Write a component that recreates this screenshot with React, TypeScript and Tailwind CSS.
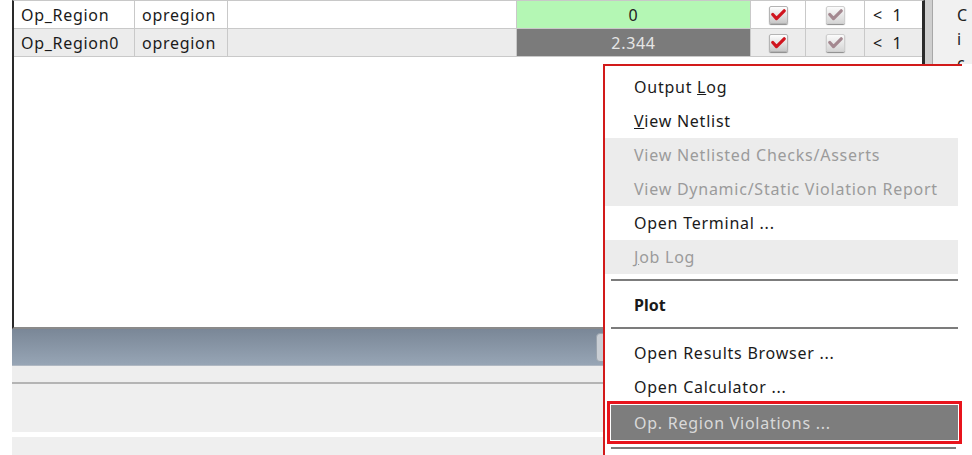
const font = { fontFamily: '"Noto Sans", "Open Sans", sans-serif' };

const Check = ({ disabled }: { disabled?: boolean }) => (
  <div
    className={`flex h-[18px] w-[19px] items-center justify-center rounded-[2px] border shadow-[0_1px_1px_#8a8a8a] ${
      disabled
        ? "border-[#cfcfcf] bg-gradient-to-b from-[#fbfbfb] to-[#d6d6d6]"
        : "border-[#b4b4b4] bg-gradient-to-b from-[#ffffff] to-[#c8c8c8]"
    }`}
  >
    <svg width="15" height="12" viewBox="0 0 15 12">
      <path
        d="M1.8 5.5 L5.5 9.6 L13.2 1.8"
        fill="none"
        stroke={disabled ? "#a48890" : "#d0141e"}
        strokeWidth="3.2"
        strokeLinecap="round"
        strokeLinejoin="round"
      />
    </svg>
  </div>
);

const rows = [
  { name: "Op_Region", type: "opregion", value: "0", pass: true },
  { name: "Op_Region0", type: "opregion", value: "2.344", pass: false },
];

type Item = { label: React.ReactNode; disabled?: boolean; bold?: boolean; sep?: boolean; active?: boolean };

const items: Item[] = [
  { label: <>Output <u>L</u>og</> },
  { label: <><u>V</u>iew Netlist</> },
  { label: "View Netlisted Checks/Asserts", disabled: true },
  { label: "View Dynamic/Static Violation Report", disabled: true },
  { label: "Open Terminal ..." },
  { label: <><u>J</u>ob Log</>, disabled: true },
  { label: "", sep: true },
  { label: "Plot", bold: true },
  { label: "", sep: true },
  { label: "Open Results Browser ..." },
  { label: "Open Calculator ..." },
  { label: "Op. Region Violations ...", active: true },
];

export default function App() {
  return (
    <div className="relative flex h-[455px] w-[972px] overflow-hidden bg-white text-[#1a1a1a]" style={font}>
      {/* main area */}
      <div className="flex w-[933px] flex-col pl-[12px]">
        <div className="flex h-[329px]">
          <div className="flex flex-1 flex-col border-b-2 border-l-2 border-r-[3px] border-t border-[#2a2a2a] border-b-[#8a8a8a] border-t-[#c8c8c8]">
            {rows.map((r, i) => (
              <div
                key={r.name}
                className={`flex h-[28px] border-b border-[#c9c9c9] text-[16px] tracking-[0.7px] ${i === 1 ? "bg-[#ececec]" : "bg-white"}`}
              >
                <div className="flex w-[121px] items-center border-r border-[#c9c9c9] pl-[7px]">{r.name}</div>
                <div className="flex w-[93px] items-center border-r border-[#c9c9c9] pl-[7px]">{r.type}</div>
                <div className="w-[289px] border-r border-[#c9c9c9]" />
                <div
                  className={`flex w-[234px] items-center justify-center border-r border-[#c9c9c9] ${
                    r.pass ? "bg-[#b4f7b4] text-[#222]" : "bg-[#7b7b7b] text-[#e6e6e6]"
                  }`}
                >
                  {r.value}
                </div>
                <div className="flex w-[55px] items-center justify-center border-r border-[#c9c9c9]">
                  <Check />
                </div>
                <div className="flex w-[59px] items-center justify-center border-r border-[#c9c9c9]">
                  <Check disabled />
                </div>
                <div className="flex flex-1 items-center pl-[8px]">
                  <span>&lt;&nbsp;&nbsp;1</span>
                </div>
              </div>
            ))}
          </div>
          <div className="w-[8px] border-r border-[#a8a8a8] bg-[#cfcfcf]" />
        </div>
        <div className="relative h-[37px] border-b border-[#b0b8c2] bg-gradient-to-b from-[#7a8797] to-[#97a5b5]">
          <div className="absolute left-[584px] top-[4px] h-[29px] w-[60px] rounded-[4px] border border-[#9aa3ad] bg-[#c9ced4]" />
        </div>
        <div className="h-[16px] bg-[#eeeeee]" />
        <div className="h-[2px] bg-[#b4b4b4]" />
        <div className="h-[48px] bg-[#efefef]" />
        <div className="h-[5px] bg-white" />
        <div className="flex-1 bg-[#efefef]" />
      </div>

      {/* right side panel */}
      <div className="flex w-[39px] flex-col bg-[#f1f1f1] pl-[24px] pt-[3px] text-[16px] leading-[24px] text-[#222]">
        <span>C</span>
        <span>i</span>
        <span>c</span>
      </div>

      {/* context menu */}
      <div className="absolute bottom-0 left-[603px] right-0 top-[64px] bg-white">
        <div className="h-full w-[359px] border-l-2 border-t-2 border-[#d21a1a] pt-[4px] text-[16px] tracking-[0.75px]">
          {items.map((it, i) =>
            it.sep ? (
              <div key={i} className="flex h-[14px] items-start pl-[6px] pr-[4px] pt-[5px]">
                <div className="h-[2px] w-full bg-[#7c7c7c]" />
              </div>
            ) : it.active ? (
              <div key={i} className="ml-[2px] mt-[-3px] border-[3px] border-[#e8141c] p-px">
                <div className="flex h-[35px] items-center bg-[#7d7d7d] pl-[23px] text-[#d9d9d9]">
                  <span>{it.label}</span>
                </div>
              </div>
            ) : (
              <div
                key={i}
                className={`mr-[4px] flex h-[34px] items-center pl-[29px] ${
                  it.disabled ? "bg-[#ececec] text-[#9b9b9b]" : ""
                } ${it.bold ? "font-bold tracking-normal" : ""}`}
              >
                <span>{it.label}</span>
              </div>
            )
          )}
          <div className="ml-[6px] mr-[6px] mt-[3px] h-[2px] bg-[#7c7c7c]" />
        </div>
      </div>
    </div>
  );
}
